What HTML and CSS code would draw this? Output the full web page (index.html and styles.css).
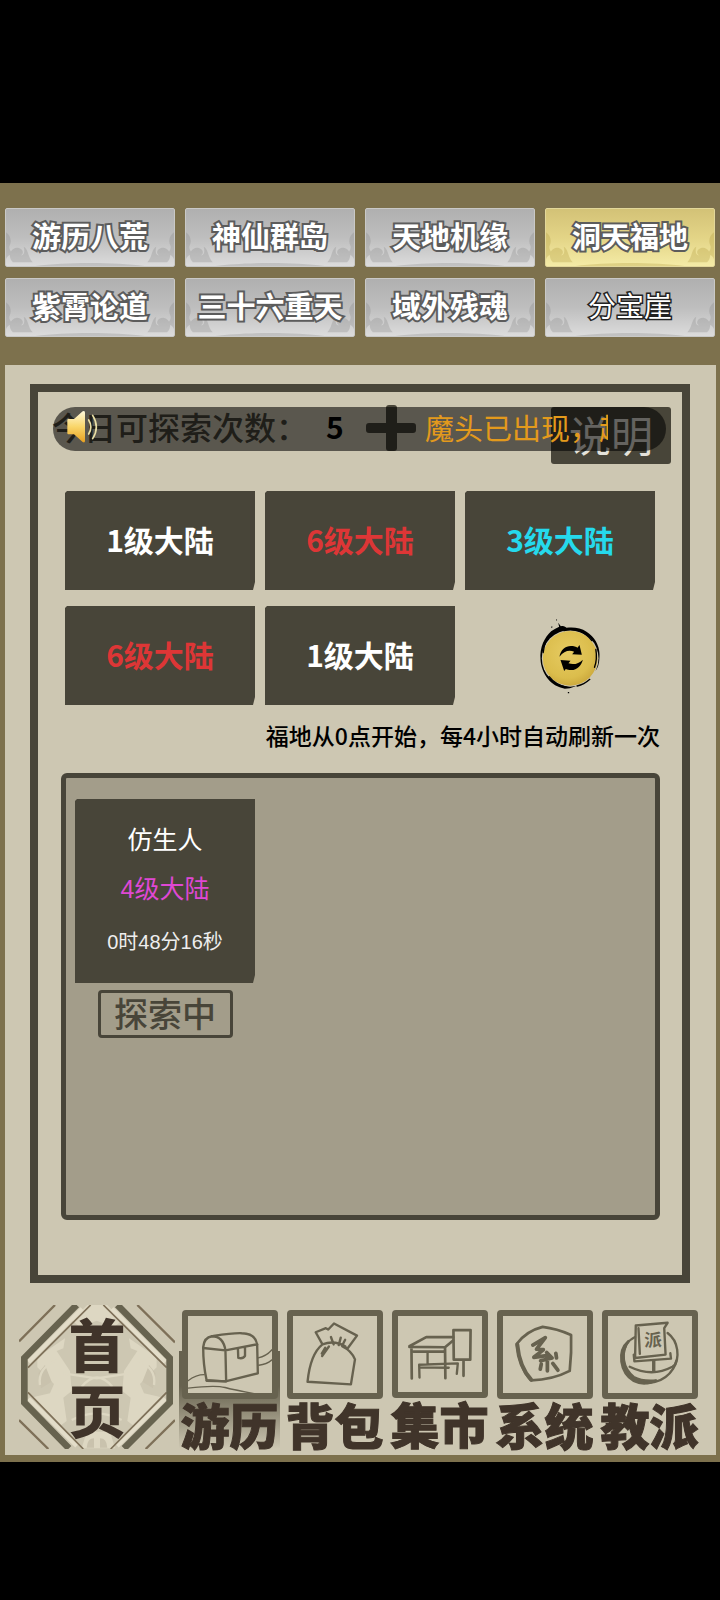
FILE: index.html
```html
<!DOCTYPE html>
<html lang="zh-CN">
<head>
    <meta charset="UTF-8">
    <meta name="viewport" content="width=device-width, initial-scale=1.0">
    <title>洞天福地</title>
    <link rel="stylesheet" href="styles.css">
</head>
<body>

    <!-- Shared tab ornament -->
    <svg class="defs" width="0" height="0" aria-hidden="true">
        <symbol id="clouds" viewBox="0 0 170 59" preserveAspectRatio="none">
            <g id="cloud-corner">
                <path d="M0 24c4 3 6 8 4 13-2 4 1 7 3 10-4 0-6 2-7 5z"/>
                <path d="M7 55c-5-4-4-14 4-15 6 0 8 6 4 8 4 0 4-5 3-9 5 3 4 11 9 16z"/>
            </g>
            <use href="#cloud-corner" transform="translate(170 0) scale(-1 1)"/>
            <path d="M30 59c30-4 80-4 110 0z"/>
        </symbol>
    </svg>

    <main class="game">
        <nav class="tabs">
            <button class="tab"><svg class="tab-art"><use href="#clouds"/></svg><span>游历八荒</span></button>
            <button class="tab"><svg class="tab-art"><use href="#clouds"/></svg><span>神仙群岛</span></button>
            <button class="tab"><svg class="tab-art"><use href="#clouds"/></svg><span>天地机缘</span></button>
            <button class="tab active"><svg class="tab-art"><use href="#clouds"/></svg><span>洞天福地</span></button>
            <button class="tab"><svg class="tab-art"><use href="#clouds"/></svg><span>紫霄论道</span></button>
            <button class="tab"><svg class="tab-art"><use href="#clouds"/></svg><span>三十六重天</span></button>
            <button class="tab"><svg class="tab-art"><use href="#clouds"/></svg><span>域外残魂</span></button>
            <button class="tab thin"><svg class="tab-art"><use href="#clouds"/></svg><span>分宝崖</span></button>
        </nav>

        <div class="panel">
            <section class="frame">
                <div class="status">
                    <span class="status-label">今日可探索次数：</span>
                    <span class="status-count">5</span>
                    <button class="add-btn" aria-label="增加次数">
                        <svg viewBox="0 0 50 46"><path d="M3 18h17V3q0-3 3-3h5q3 0 3 3v15h16q3 0 3 3v4q0 3-3 3H31v15q0 3-3 3h-5q-3 0-3-3V28H3q-3 0-3-3v-4q0-3 3-3z"/></svg>
                    </button>
                    <button class="help-btn">说明</button>
                    <div class="ticker">
                        <svg class="speaker" viewBox="0 0 96 102">
                            <defs>
                                <linearGradient id="gold" x1="0" y1="0" x2="0" y2="1">
                                    <stop offset="0" stop-color="#fff9dc"/>
                                    <stop offset=".5" stop-color="#f9d66a"/>
                                    <stop offset="1" stop-color="#e8a020"/>
                                </linearGradient>
                            </defs>
                            <path d="M4 30q0-3 3-3h17L50 4q7-4 7 4v84q0 8-7 4L24 73H7q-3 0-3-3z" fill="url(#gold)"/>
                            <path d="M68 30q13 21 0 42M80 16q22 35 0 70" fill="none" stroke="#e9dfa5" stroke-width="5" stroke-linecap="round"/>
                        </svg>
                        <span class="ticker-text">魔头已出现，赶</span>
                    </div>
                </div>

                <div class="lands">
                    <button class="land">1级大陆</button>
                    <button class="land red">6级大陆</button>
                    <button class="land cyan">3级大陆</button>
                    <button class="land red">6级大陆</button>
                    <button class="land">1级大陆</button>
                    <div class="refresh-cell">
                        <button class="refresh" aria-label="刷新">
                            <svg viewBox="530 410 200 240">
                                <defs>
                                    <radialGradient id="coin" cx=".45" cy=".4" r=".65">
                                        <stop offset="0" stop-color="#e6cb62"/>
                                        <stop offset=".7" stop-color="#dbbd4c"/>
                                        <stop offset="1" stop-color="#c9a53a"/>
                                    </radialGradient>
                                </defs>
                                <path d="M540 540c-3-35 12-66 32-84 8-7 17-10 24-14l-3-12 8 11c9-3 14 2 17 4 22-2 44 0 60 12 23 14 39 40 39 68 0 20-2 38-12 50l1-12c-12 30-42 54-78 64l-15 1c-42-6-71-45-73-88z"/>
                                <circle cx="629" cy="537" r="85" fill="#cdc7b2"/>
                                <circle cx="629" cy="537" r="82" fill="url(#coin)"/>
                                <path d="M548 520c2-30 16-50 38-62M610 454c36-8 66 6 84 30M706 510c4 24 1 40-4 54M566 592c14 18 34 28 54 32M650 620c15-3 27-10 38-20" fill="none" stroke="#000" stroke-width="4" stroke-linecap="round"/>
                                <path d="M597 532c3-20 18-32 34-32 9 0 16 2 20 5l6-8 7 29-29-1 6-8c-14-6-31-3-44 15zM667 541c-4 18-18 32-36 31-6 0-10-1-15-3l-5 6-11-33 30 2-6 8c15 5 30 2 43-11z"/>
                                <path d="M587 418l3 4-2 3zM573 441l4 2-5 3zM622 638h4v4h-4z"/>
                            </svg>
                        </button>
                    </div>
                </div>

                <p class="note">福地从0点开始，每4小时自动刷新一次</p>

                <div class="queue">
                    <article class="task">
                        <div class="task-card">
                            <h2 class="task-name">仿生人</h2>
                            <p class="task-land">4级大陆</p>
                            <p class="task-time">0时48分16秒</p>
                        </div>
                        <button class="task-btn">探索中</button>
                    </article>
                </div>
            </section>

            <nav class="bottom-nav">
                <button class="home">
                    <svg class="home-art" viewBox="57 105 468 432">
                        <g fill="#ddd7c2">
                            <path d="M262 105h60l45 45-25 22-52-20-50 20-25-22z"/>
                            <path d="M112 262L195 205l-5 30-20 8 40 60 5 60-25 20 10 70-20 15L98 382l52-12 12-28-50-50z"/>
                            <path d="M470 262L387 205l5 30 20 8-40 60-5 60 25 20-10 70 20 15 82-86-52-12-12-28 50-50z"/>
                            <path d="M245 535l15-50h70l15 50z"/>
                        </g>
                        <g fill="#c9c2ad">
                            <path d="M135 285l-20 25 8 45 32-20zM447 285l20 25-8 45-32-20z"/>
                            <path d="M282 505q-20 0-22 28h22zM300 505q20 0 22 28h-22z"/>
                        </g>
                        <g fill="none" stroke="#ddd7c2" stroke-width="7">
                            <path d="M120 345q-8-50 50-75M462 345q8-50-50-75M190 310l100 15 100-15M215 450q75-40 150 0M245 350q46-55 92 0"/>
                        </g>
                        <g fill="none" stroke="#e3ddc9" stroke-width="12">
                            <path d="M246 116L86 276M336 116l160 160M86 386l144 142M496 386L352 528"/>
                        </g>
                        <g fill="none" stroke="#7e7058" stroke-width="7">
                            <path d="M165 105L57 214M412 105l113 112M57 450l88 87M525 450l-88 87"/>
                            <path d="M272 105L84 293M310 105l190 188M84 367l166 170M500 367L332 537" stroke-width="5"/>
                        </g>
                        <path d="M230 105L73 264v134l134 137M352 105l157 159v134L372 535" fill="none" stroke="#67634f" stroke-width="20"/>
                    </svg>
                    <span class="home-label">首页</span>
                </button>
                <div class="nav-items">
                    <button class="nav-item current">
                        <span class="nav-icon">
                            <svg viewBox="567 138 249 228">
                                <path d="M612 230c2-20 12-30 26-32 25-4 60-10 88-9 28 0 42 10 46 33l2 86-96 24-56-4q-10-45-10-98z"/>
                                <path d="M638 198c24 0 36 16 40 42l2 88M612 233l66 7 94-18M622 330l58 2M715 234l1 28q14 4 20-6v-26"/>
                                <path d="M567 330q24-18 48-18M567 352q80-10 110-2t86 18M775 262q25-5 41-24M777 284q24-3 39-16" stroke-width="4"/>
                            </svg>
                        </span>
                        <span class="nav-label">游历</span>
                    </button>
                    <button class="nav-item">
                        <span class="nav-icon">
                            <svg viewBox="68 76 248 227">
                                <path d="M155 160l-20-36 30-12 7 4 17-18 68 36-28 38-15-6q26 12 37 38l-12 74-128-8c4-40 14-86 44-110zM155 160q35-14 68 6"/>
                                <path d="M174 166l-20 28M180 138l8 22M209 140l-6 22M222 146l-9 18M163 170l-10 17"/>
                            </svg>
                        </span>
                        <span class="nav-label">背包</span>
                    </button>
                    <button class="nav-item">
                        <span class="nav-icon">
                            <svg viewBox="384 76 250 227">
                                <path d="M418 166l50-27h80M418 168l106 1 24-20M424 170l1 92M524 170l1 91M430 182h90" stroke-width="8"/>
                                <path d="M549 118h51l-1 88h-49zM579 208v46" stroke-width="8"/>
                                <path d="M472 184v34M447 221l1 38M447 221l115-4-3 31M450 229l85 1"/>
                            </svg>
                        </span>
                        <span class="nav-label">集市</span>
                    </button>
                    <button class="nav-item">
                        <span class="nav-icon">
                            <svg viewBox="65 76 248 227">
                                <path d="M106 158q28-38 76-50 42 5 84 24 2 50-4 106-50 26-114 28-34-36-42-108z" stroke-width="8"/>
                                <path d="M107 160q6 66 41 104" stroke-width="12"/>
                                <path d="M153 162l37-22-26 34 20 1M184 176l-28 22 38-5M194 184l16 16-34 8M196 200v38M178 218l-3 15M212 216l15 20M221 186l2 14" stroke-width="11"/>
                            </svg>
                        </span>
                        <span class="nav-label">系统</span>
                    </button>
                    <button class="nav-item">
                        <span class="nav-icon">
                            <svg viewBox="386 76 248 227">
                                <path d="M466 138c-42 18-48 90-6 122 40 28 94 10 118-28 22-34 16-82-16-106"/>
                                <path d="M446 150c-24 36-16 80 16 106q26 14 66 10-34 18-66 2c-42-26-50-88-16-118z" class="solid"/>
                                <path d="M468 104l94-8-10 16 4 78-90 10zM476 112l4 76M462 190l2 20 108-8-2-16M450 226q66 32 126 0 10-6 12-18"/>
                                <path d="M521 208v28" stroke-width="10"/>
                                <text x="519" y="164" text-anchor="middle">派</text>
                            </svg>
                        </span>
                        <span class="nav-label">教派</span>
                    </button>
                </div>
            </nav>
        </div>
    </main>

</body>
</html>
```

FILE: styles.css
```css
:root {
    --olive: #7d714d;
    --paper: #cdc7b2;
    --ink: #484539;
    --nav-ink: #67624f;
    --label-ink: #40342a;
    --queue: #a39d8a;
}

* {
    box-sizing: border-box;
}

body {
    margin: 0;
    padding-top: 183px;
    background-color: #000;
    font-family: "Noto Sans CJK SC", "Noto Sans", sans-serif;
    color: #000;
}

h2,
p {
    margin: 0;
    font-weight: normal;
}

button {
    padding: 0;
    border: none;
    background: none;
    font-family: inherit;
    color: inherit;
    cursor: pointer;
}

svg {
    display: block;
}

.defs {
    position: absolute;
}

.game {
    background-color: var(--olive);
    padding: 25px 4px 7px 5px;
}

/* Top tabs */
.tabs {
    display: grid;
    grid-template-columns: repeat(4, 1fr);
    gap: 11px 10px;
    padding: 0 1px 28px 0;
}

.tab {
    position: relative;
    height: 59px;
    padding-bottom: 6px;
    border: 1px solid #c9c9c7;
    border-radius: 2px;
    background: linear-gradient(#b0b0b0, #bebebe 50%, #dcdcdc);
    font-size: 29px;
    line-height: 50px;
    font-weight: bold;
    white-space: nowrap;
    color: #fff;
}

.tab span {
    position: relative;
    -webkit-text-stroke: 4px #5c5c5c;
    paint-order: stroke fill;
}

.tab-art {
    position: absolute;
    inset: 0;
    width: 100%;
    height: 100%;
    fill: #888;
    opacity: 0.3;
}

.tab.active {
    border-color: #e2d79a;
    background: linear-gradient(#d3c277, #e3d486 50%, #f4eba6);
}

.tab.active .tab-art {
    fill: #b09a3c;
}

.tab.thin {
    font-size: 28px;
    font-weight: normal;
}

.tab.thin span {
    -webkit-text-stroke: 3px #222;
}

/* Main panel */
.panel {
    background-color: var(--paper);
    padding: 19px 14px 6px;
}

.frame {
    margin: 0 12px 0 11px;
    padding: 13px 11px 55px 14px;
    border: 8px solid var(--ink);
}

.status {
    position: relative;
    display: flex;
    align-items: flex-start;
    height: 59px;
    color: var(--ink);
}

.status-label {
    font-size: 32px;
    line-height: 42px;
    font-weight: 500;
    white-space: nowrap;
}

.status-count {
    margin-left: 18px;
    font-size: 30px;
    line-height: 42px;
    font-weight: bold;
    color: #000;
}

.add-btn {
    margin-left: 22px;
}

.add-btn svg {
    width: 50px;
    height: 46px;
    fill: var(--ink);
}

.help-btn {
    width: 120px;
    height: 57px;
    margin: 2px 0 0 auto;
    padding-bottom: 4px;
    border-radius: 3px;
    background-color: var(--ink);
    font-size: 42px;
    line-height: 52px;
    color: #e4e2da;
}

/* Broadcast bar lies over the status row */
.ticker {
    position: absolute;
    top: 2px;
    left: 1px;
    right: 5px;
    height: 44px;
    display: flex;
    align-items: center;
    border-radius: 22px;
    background-color: rgba(0, 0, 0, 0.56);
    pointer-events: none;
}

.speaker {
    width: 32px;
    height: 34px;
    margin: 0 0 4px 13px;
}

.ticker-text {
    width: 183px;
    margin: 0 58px 4px auto;
    overflow: hidden;
    font-size: 29px;
    line-height: 40px;
    white-space: nowrap;
    color: #e39a1c;
}

/* Lands */
.lands {
    display: grid;
    grid-template-columns: repeat(3, 1fr);
    gap: 16px 10px;
    margin: 27px 16px 0 13px;
}

.land,
.task-card {
    background-color: var(--ink);
    clip-path: polygon(0 2px, 2px 0, 100% 0, 100% calc(100% - 8px), calc(100% - 2px) 100%, 0 100%);
}

.land {
    height: 99px;
    padding-bottom: 4px;
    font-size: 30px;
    line-height: 40px;
    font-weight: bold;
    color: #fff;
}

.land.red {
    color: #dd3636;
}

.land.cyan {
    color: #25d9ec;
}

.refresh-cell {
    display: flex;
    justify-content: center;
    align-items: center;
    padding-left: 20px;
}

.refresh svg {
    width: 67px;
    height: 80px;
}

.note {
    margin: 14px 11px 0 0;
    font-size: 23px;
    line-height: 32px;
    font-weight: 500;
    text-align: right;
    white-space: nowrap;
}

/* Exploration queue */
.queue {
    min-height: 447px;
    margin: 22px 11px 0 9px;
    padding: 21px 9px;
    border: 5px solid var(--ink);
    border-radius: 6px;
    background-color: var(--queue);
}

.task {
    width: 180px;
    display: flex;
    flex-direction: column;
    align-items: center;
    gap: 7px;
}

.task-card {
    width: 100%;
    padding: 23px 0;
    display: flex;
    flex-direction: column;
    gap: 13px;
    font-family: "Liberation Sans", "Noto Sans CJK SC", sans-serif;
    font-size: 25px;
    line-height: 36px;
    text-align: center;
    color: #fff;
}

.task-name {
    font-size: 25px;
}

.task-land {
    color: #df48d4;
}

.task-time {
    padding-top: 4px;
    font-size: 20px;
    color: #eee;
}

.task-btn {
    width: 135px;
    height: 48px;
    padding-bottom: 2px;
    border: 3px solid var(--ink);
    border-radius: 4px;
    font-size: 34px;
    line-height: 40px;
    font-weight: 500;
    color: var(--ink);
}

/* Bottom navigation */
.bottom-nav {
    display: flex;
    align-items: flex-start;
    margin-top: 22px;
}

.home {
    position: relative;
    width: 156px;
    height: 144px;
    flex: none;
}

.home-art {
    width: 156px;
    height: 144px;
}

.home-label {
    position: absolute;
    inset: 4px 0 0;
    width: 60px;
    margin: 0 auto;
    font-size: 57px;
    line-height: 66px;
    font-weight: 900;
    word-break: break-all;
    color: var(--label-ink);
}

.nav-items {
    flex: 1;
    display: grid;
    grid-template-columns: repeat(5, 1fr);
    gap: 4px;
    padding: 5px 2px 0 4px;
}

.nav-item {
    display: flex;
    flex-direction: column;
    align-items: center;
    min-width: 0;
}

.nav-item.current {
    background: linear-gradient(transparent 41px, var(--nav-ink) 41px, var(--nav-ink) 76px, transparent);
}

.nav-icon {
    width: 96px;
    border: 6px solid var(--nav-ink);
    border-radius: 4px;
    background-color: var(--paper);
}

.nav-icon svg {
    width: 100%;
    fill: none;
    stroke: var(--nav-ink);
    stroke-width: 7;
    stroke-linecap: round;
    stroke-linejoin: round;
}

.nav-icon .solid {
    fill: var(--nav-ink);
}

.nav-icon text {
    font-size: 52px;
    font-weight: bold;
    fill: var(--nav-ink);
    stroke: none;
}

.nav-label {
    font-size: 49px;
    line-height: 50px;
    font-weight: 900;
    white-space: nowrap;
    color: var(--label-ink);
    -webkit-text-stroke: 1px var(--label-ink);
}
```
